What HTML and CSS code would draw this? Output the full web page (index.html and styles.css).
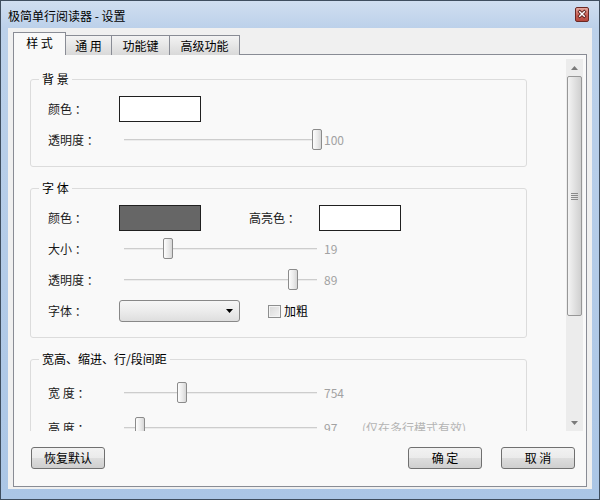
FILE: index.html
```html
<!DOCTYPE html>
<html lang="zh-CN">
<head>
    <meta charset="UTF-8">
    <title>极简单行阅读器 - 设置</title>
    <link rel="stylesheet" href="styles.css">
</head>
<body>
    <div class="window">
        <div class="titlebar">
            <span class="title">极简单行阅读器 - 设置</span>
            <span class="close">
                <svg width="13" height="12" viewBox="0 0 13 12">
                    <path d="M4 3.5 L9 8.5 M9 3.5 L4 8.5" stroke="#5a1f1b" stroke-width="3.4" stroke-linecap="square"/>
                    <path d="M4 3.5 L9 8.5 M9 3.5 L4 8.5" stroke="#fff" stroke-width="1.6" stroke-linecap="square"/>
                </svg>
            </span>
        </div>
        <div class="client">
            <div class="tabs">
                <div class="tab active">样 式</div>
                <div class="tab w46">通 用</div>
                <div class="tab w58">功能键</div>
                <div class="tab w70">高级功能</div>
            </div>
            <div class="page">
                <div class="scroller">
                    <div class="content">
                        <!-- 背景 -->
                        <div class="group">
                            <div class="legend">背 景</div>
                            <div class="row">
                                <span class="label">颜色 ：</span>
                                <span class="swatch"></span>
                            </div>
                            <div class="row">
                                <span class="label">透明度 ：</span>
                                <div class="slider"><span class="thumb" style="left: 193px"></span></div>
                                <span class="val">100</span>
                            </div>
                        </div>
                        <!-- 字体 -->
                        <div class="group">
                            <div class="legend">字 体</div>
                            <div class="row">
                                <span class="label">颜色 ：</span>
                                <span class="swatch dark"></span>
                                <span class="label hl">高亮色 ：</span>
                                <span class="swatch"></span>
                            </div>
                            <div class="row">
                                <span class="label">大小 ：</span>
                                <div class="slider"><span class="thumb" style="left: 44px"></span></div>
                                <span class="val">19</span>
                            </div>
                            <div class="row">
                                <span class="label">透明度 ：</span>
                                <div class="slider"><span class="thumb" style="left: 169px"></span></div>
                                <span class="val">89</span>
                            </div>
                            <div class="row">
                                <span class="label">字体 ：</span>
                                <div class="combo">
                                    <svg width="7" height="4" viewBox="0 0 7 4"><path d="M0 0 H7 L3.5 4 Z" fill="#000"/></svg>
                                </div>
                                <span class="check"></span>
                                <span class="check-label">加粗</span>
                            </div>
                        </div>
                        <!-- 宽高 -->
                        <div class="group loose">
                            <div class="legend">宽高、缩进、行/段间距</div>
                            <div class="row">
                                <span class="label">宽 度 ：</span>
                                <div class="slider"><span class="thumb" style="left: 58px"></span></div>
                                <span class="val">754</span>
                            </div>
                            <div class="row">
                                <span class="label">高 度 ：</span>
                                <div class="slider"><span class="thumb" style="left: 16px"></span></div>
                                <span class="val">97</span>
                                <span class="note">(仅在多行模式有效)</span>
                            </div>
                        </div>
                    </div>
                    <div class="vscroll">
                        <div class="arrow">
                            <svg width="7" height="4" viewBox="0 0 7 4"><path d="M0 4 H7 L3.5 0 Z" fill="#7a7a7a"/></svg>
                        </div>
                        <div class="sthumb">
                            <svg width="7" height="7" viewBox="0 0 7 7">
                                <path d="M0 0.5 H7 M0 2.5 H7 M0 4.5 H7 M0 6.5 H7" stroke="#8a8a8a" stroke-width="1"/>
                            </svg>
                        </div>
                        <div class="spacer"></div>
                        <div class="arrow">
                            <svg width="7" height="4" viewBox="0 0 7 4"><path d="M0 0 H7 L3.5 4 Z" fill="#7a7a7a"/></svg>
                        </div>
                    </div>
                </div>
                <div class="buttons">
                    <div class="btn">恢复默认</div>
                    <div class="spacer"></div>
                    <div class="btn">确 定</div>
                    <div class="btn">取 消</div>
                </div>
            </div>
        </div>
    </div>
</body>
</html>
```

FILE: styles.css
```css
body {
    margin: 0;
    font-family: "Noto Sans CJK SC", "Noto Sans", sans-serif;
    font-size: 12px;
    color: #000;
}
.window {
    width: 600px;
    height: 500px;
    box-sizing: border-box;
    border: 1px solid #3f4e5f;
    background: linear-gradient(to bottom, #d0def0 0, #bcd1ea 27px, #abc6e6 100%);
    display: flex;
    flex-direction: column;
}
.titlebar {
    height: 27px;
    flex: none;
    display: flex;
    align-items: center;
    padding: 3px 10px 0 7px;
    box-sizing: border-box;
}
.title {
    flex: 1;
    line-height: 16px;
}
.close {
    width: 14px;
    height: 15px;
    margin-top: -4px;
    box-sizing: border-box;
    border: 1px solid #6b2823;
    border-radius: 2px;
    background: linear-gradient(to bottom, #e6aaa0, #c9645a 50%, #b5463b);
    display: flex;
    align-items: center;
    justify-content: center;
}
.close svg {
    display: block;
}
.client {
    flex: 1;
    margin: 0 7px 10px;
    background: #f0f0f0;
    padding: 5px 5px 2px;
    display: flex;
    flex-direction: column;
    min-height: 0;
}

/* tabs */
.tabs {
    display: flex;
    align-items: flex-end;
    height: 22px;
    flex: none;
    margin-bottom: -1px;
    position: relative;
    z-index: 1;
}
.tab {
    height: 20px;
    box-sizing: border-box;
    border: 1px solid #898c95;
    border-left: none;
    border-bottom: none;
    background: linear-gradient(to bottom, #f3f3f3, #e6e6e6 50%, #d9d9d9);
    display: flex;
    align-items: center;
    justify-content: center;
    line-height: 16px;
}
.tab.active {
    width: 53px;
    height: 23px;
    border-left: 1px solid #898c95;
    background: #f9f9f9;
    padding-bottom: 2px;
}
.w46 { width: 46px; }
.w58 { width: 58px; }
.w70 { width: 70px; }

.page {
    flex: 1;
    border: 1px solid #898c95;
    background: #f9f9f9;
    display: flex;
    flex-direction: column;
    min-height: 0;
}
.scroller {
    height: 372px;
    margin: 4px 3px 0 0;
    display: flex;
    flex: none;
}
.content {
    flex: 1;
    overflow: hidden;
    padding: 20px 39px 0 16px;
}

/* group boxes */
.group {
    border: 1px solid #dcdcdc;
    border-radius: 3px;
    display: flex;
    flex-direction: column;
    gap: 5px;
    padding: 0 0 13px 17px;
    margin-bottom: 21px;
}
.legend {
    align-self: flex-start;
    margin: -9px 0 4px -9px;
    padding: 0 3px;
    background: #f9f9f9;
    line-height: 16px;
}
.group.loose {
    gap: 9px;
}
.row {
    height: 26px;
    display: flex;
    align-items: center;
}
.label {
    width: 71px;
    flex: none;
    line-height: 16px;
    color: #1a1a1a;
}
.label.hl {
    margin-left: 48px;
    width: 70px;
}
.swatch {
    width: 82px;
    height: 26px;
    box-sizing: border-box;
    border: 1px solid #202020;
    background: #fff;
}
.swatch.dark {
    background: #666;
}

/* sliders */
.slider {
    width: 203px;
    height: 22px;
    position: relative;
}
.slider::before {
    content: '';
    position: absolute;
    left: 5px;
    right: 5px;
    top: 10px;
    border-top: 1px solid #cdcdcd;
    border-bottom: 1px solid #ececec;
}
.thumb {
    position: absolute;
    top: 0;
    width: 10px;
    height: 21px;
    box-sizing: border-box;
    border: 1px solid #8b8b8b;
    border-radius: 2px;
    background: linear-gradient(to right, #fdfdfd, #e9e9e9 60%, #d6d6d6);
}
.val {
    margin-left: 2px;
    width: 38px;
    color: #a2a2a2;
    line-height: 16px;
}
.note {
    color: #b4b4b4;
    line-height: 16px;
}

.combo {
    width: 121px;
    height: 22px;
    box-sizing: border-box;
    border: 1px solid #888;
    border-radius: 3px;
    background: linear-gradient(to bottom, #f6f6f6, #ececec 50%, #dedede);
    display: flex;
    align-items: center;
    justify-content: flex-end;
    padding-right: 6px;
}
.combo svg {
    display: block;
}
.check {
    width: 13px;
    height: 13px;
    box-sizing: border-box;
    margin-left: 28px;
    border: 1px solid #8e8f8f;
    background: linear-gradient(135deg, #d8d8d8, #f4f4f4);
    box-shadow: inset 0 0 0 1px #f4f4f4;
}
.check-label {
    margin-left: 3px;
    line-height: 16px;
}

/* scrollbar */
.vscroll {
    width: 17px;
    flex: none;
    background: #ececec;
    display: flex;
    flex-direction: column;
}
.arrow {
    height: 17px;
    display: flex;
    align-items: center;
    justify-content: center;
}
.arrow svg,
.sthumb svg {
    display: block;
}
.sthumb {
    height: 240px;
    margin: 0 1px;
    box-sizing: border-box;
    border: 1px solid #979797;
    border-radius: 2px;
    background: linear-gradient(to right, #f3f3f3, #e3e3e3 45%, #cfcfcf);
    display: flex;
    align-items: center;
    justify-content: center;
}
.spacer {
    flex: 1;
}

/* buttons */
.buttons {
    display: flex;
    align-items: center;
    gap: 19px;
    padding: 16px 11px 0 17px;
}
.btn {
    width: 74px;
    height: 22px;
    box-sizing: border-box;
    border: 1px solid #707070;
    border-radius: 3px;
    background: linear-gradient(to bottom, #f2f2f2, #ebebeb 48%, #dddddd 52%, #cfcfcf);
    display: flex;
    align-items: center;
    justify-content: center;
    line-height: 16px;
}
```
